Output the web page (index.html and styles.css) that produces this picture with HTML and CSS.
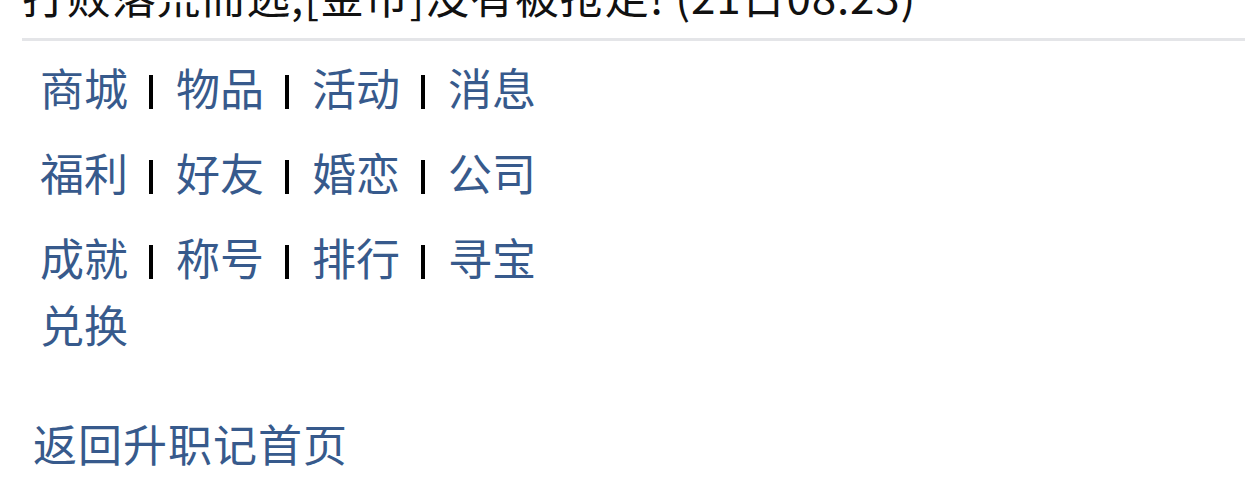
FILE: index.html
```html
<!DOCTYPE html>
<html lang="zh-CN">
<head>
<meta charset="utf-8">
<title>升职记</title>
<link rel="stylesheet" href="styles.css">
</head>
<body>
<div class="page">
  <div class="msg">打败落荒而逃,[金币]没有被抢走! (21日08:23)</div>
  <div class="rule"></div>
  <div class="nav">
    <div class="row"><a href="#">商城</a><span class="sep">|</span><a href="#">物品</a><span class="sep">|</span><a href="#">活动</a><span class="sep">|</span><a href="#">消息</a></div>
    <div class="row"><a href="#">福利</a><span class="sep">|</span><a href="#">好友</a><span class="sep">|</span><a href="#">婚恋</a><span class="sep">|</span><a href="#">公司</a></div>
    <div class="row wrap"><a href="#">成就</a><span class="sep">|</span><a href="#">称号</a><span class="sep">|</span><a href="#">排行</a><span class="sep">|</span><a href="#">寻宝</a> <a href="#">兑换</a></div>
  </div>
  <div class="back"><a href="#">返回升职记首页</a></div>
</div>
</body>
</html>
```

FILE: styles.css
```css
html, body {
  margin: 0;
  padding: 0;
  background: #ffffff;
  overflow: hidden;
}
.page {
  padding: 0 6px 0 22px;
  font-family: "Noto Sans CJK SC", "Noto Sans", sans-serif;
  font-size: 44px;
}
.msg {
  color: #111111;
  line-height: 50px;
  margin-top: -30px;
  letter-spacing: 0.85px;
  white-space: nowrap;
}
.rule {
  height: 3px;
  background: #e4e5e8;
  margin-top: 18px;
}
.nav {
  padding-left: 18px;
  margin-top: 13px;
}
.row {
  line-height: 67px;
  margin-bottom: 18px;
}
.row.wrap {
  width: 520px;
}
a {
  color: #375a8c;
  text-decoration: none;
}
.sep {
  display: inline-block;
  width: 4px;
  height: 34px;
  margin: 0 23px 0 21px;
  background: #000000;
  color: transparent;
  overflow: hidden;
  font-size: 10px;
  line-height: 34px;
  vertical-align: -3px;
}
.back {
  padding-left: 11px;
  margin-top: 52px;
  line-height: 67px;
  letter-spacing: 1px;
}
```
